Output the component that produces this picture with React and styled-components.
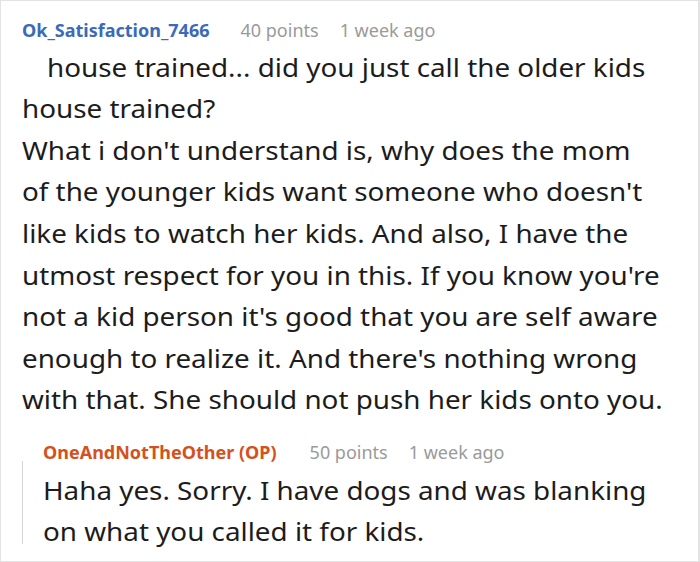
import React from "react";
import styled, { createGlobalStyle } from "styled-components";

const Global = createGlobalStyle`
  html, body { margin: 0; padding: 0; background: #fff; }
  #root { width: 700px; height: 562px; }
`;

const Frame = styled.div`
  box-sizing: border-box;
  width: 700px;
  height: 562px;
  border: 1px solid #e3e3e3;
  border-right-width: 2px;
  padding: 17px 0 0 21px;
  font-family: "Noto Sans", "Open Sans", sans-serif;
  background: #fff;
  overflow: hidden;
`;

const Comment = styled.div`
  display: flex;
  flex-direction: column;
`;

const Meta = styled.div`
  display: flex;
  align-items: baseline;
  font-size: 18px;
  line-height: 24px;
  color: #9a9a9a;
  white-space: nowrap;
`;

const User = styled.span`
  font-weight: 700;
  color: ${(p) => p.$color};
  margin-right: ${(p) => p.$gap}px;
`;

const Points = styled.span`
  margin-right: 21px;
`;

const Body = styled.div`
  margin-top: ${(p) => p.$top}px;
  font-size: 24.5px;
  line-height: 41.6px;
  color: #1c1c1c;
`;

const Line = styled.span`
  display: block;
  white-space: pre;
  padding-left: ${(p) => p.$indent || 0}px;
  transform: scaleX(1.135);
  transform-origin: 0 50%;
`;

const Reply = styled.div`
  display: flex;
  margin-top: 19px;
`;

const Thread = styled.div`
  flex: none;
  width: 1px;
  background: #d6d6d6;
  margin: 21px 20px 0 0;
  height: 83px;
`;

const first = [
  "house trained... did you just call the older kids",
  "house trained?",
  "What i don't understand is, why does the mom",
  "of the younger kids want someone who doesn't",
  "like kids to watch her kids. And also, I have the",
  "utmost respect for you in this. If you know you're",
  "not a kid person it's good that you are self aware",
  "enough to realize it. And there's nothing wrong",
  "with that. She should not push her kids onto you.",
];

const second = [
  "Haha yes. Sorry. I have dogs and was blanking",
  "on what you called it for kids.",
];

export default function App() {
  return (
    <>
      <Global />
      <Frame>
        <Comment>
          <Meta>
            <User $color="#3a6ab8" $gap={31}>Ok_Satisfaction_7466</User>
            <Points>40 points</Points>
            <span>1 week ago</span>
          </Meta>
          <Body $top={4.7}>
            {first.map((t, i) => (
              <Line key={i} $indent={i === 0 ? 22 : 0}>{t}</Line>
            ))}
          </Body>
        </Comment>
        <Reply>
          <Thread />
          <Comment>
            <Meta>
              <User $color="#d4511e" $gap={33}>OneAndNotTheOther (OP)</User>
              <Points>50 points</Points>
              <span>1 week ago</span>
            </Meta>
            <Body $top={5.7}>
              {second.map((t, i) => (
                <Line key={i}>{t}</Line>
              ))}
            </Body>
          </Comment>
        </Reply>
      </Frame>
    </>
  );
}
